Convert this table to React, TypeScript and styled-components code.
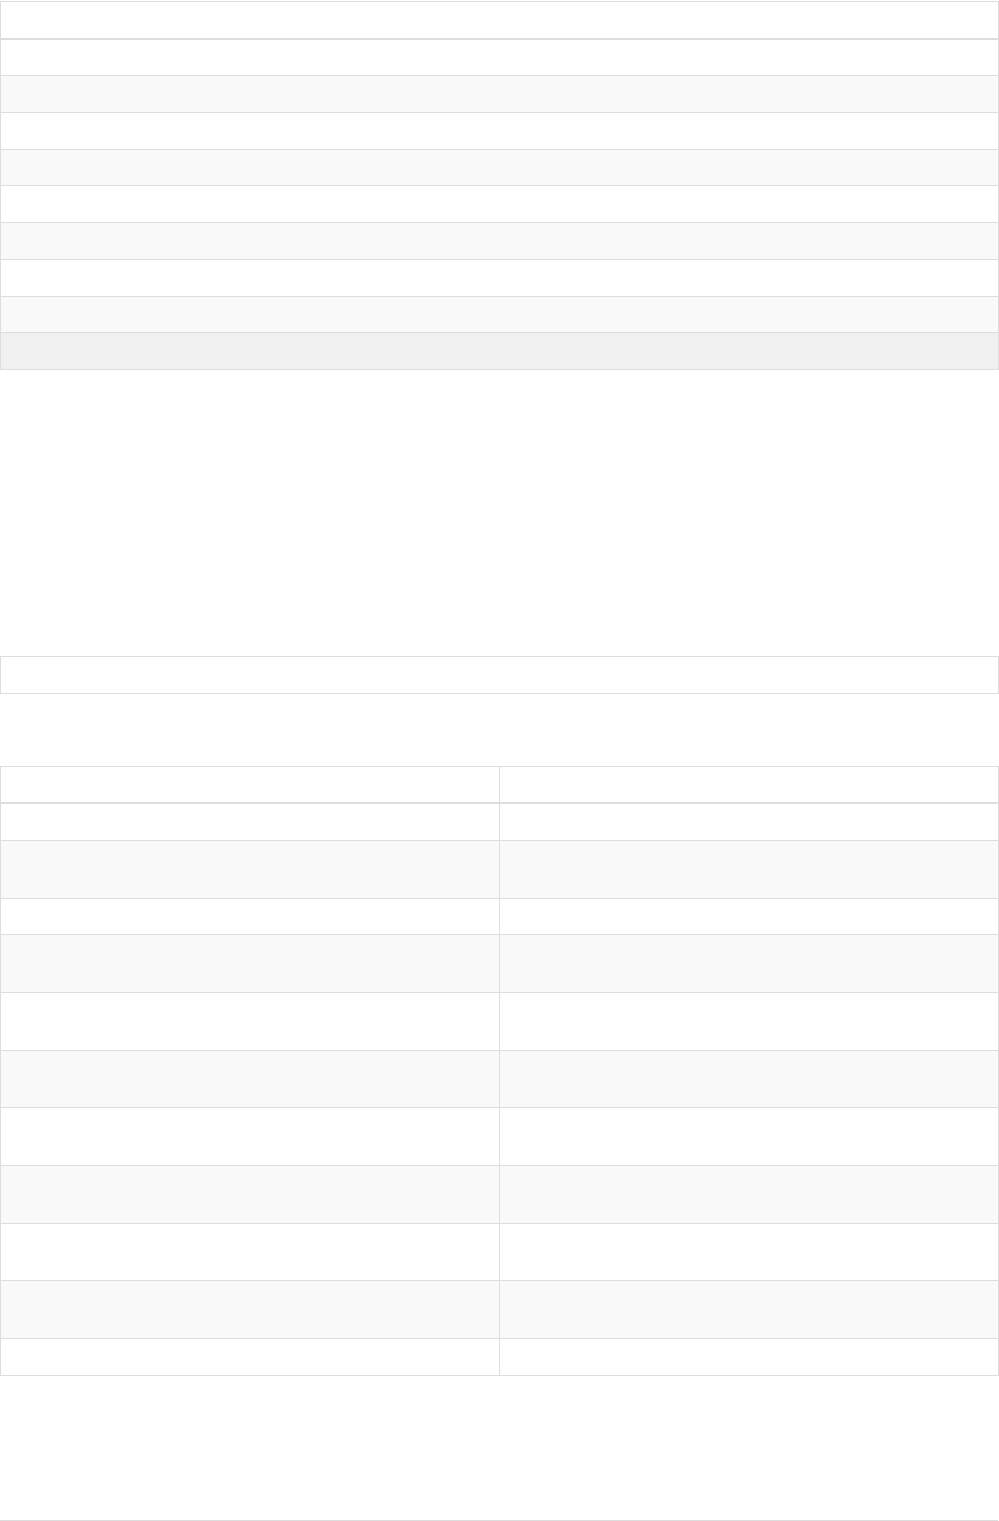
import React from "react";
import styled, { createGlobalStyle } from "styled-components";

const GlobalStyle = createGlobalStyle`
  html, body {
    margin: 0;
    padding: 0;
    background: #ffffff;
  }
  body {
    font-family: "Liberation Sans", Arial, sans-serif;
    font-size: 14px;
    color: #333333;
  }
`;

const Page = styled.div`
  width: 999px;
  display: flex;
  flex-direction: column;
  padding-top: 1px;
`;

const Section = styled.div<{ $gap: number }>`
  margin-top: ${(p) => p.$gap}px;
`;

const Table = styled.table`
  width: 100%;
  border-collapse: collapse;
  border-spacing: 0;
  border: 1px solid #dddddd;
  table-layout: fixed;
`;

const HeadCell = styled.th`
  padding: 7.35px 8px;
  line-height: 21px;
  text-align: left;
  font-weight: bold;
  border: 1px solid #dddddd;
  border-bottom: 2px solid #dddddd;
`;

const Row = styled.tr<{ $tone: "plain" | "stripe" | "active" }>`
  background: ${(p) =>
    p.$tone === "stripe" ? "#f9f9f9" : p.$tone === "active" ? "#f0f0f0" : "#ffffff"};
`;

const Cell = styled.td`
  padding: 7.35px 8px;
  line-height: 21px;
  border: 1px solid #dddddd;
  vertical-align: top;
`;

const Blank = styled.span<{ $lines: number }>`
  display: block;
  height: ${(p) => p.$lines * 21}px;
`;

const Box = styled.div`
  border: 1px solid #dddddd;
  padding: 7.35px 8px;
  line-height: 21px;
`;

const Rule = styled.div`
  width: 998px;
  border-top: 1px solid #dddddd;
`;

const firstRows: Array<"plain" | "stripe" | "active"> = [
  "plain",
  "stripe",
  "plain",
  "stripe",
  "plain",
  "stripe",
  "plain",
  "stripe",
  "active",
];

const secondRows: number[] = [1, 2, 1, 2, 2, 2, 2, 2, 2, 2, 1];

export default function App() {
  return (
    <>
      <GlobalStyle />
      <Page>
        <Table>
          <thead>
            <tr>
              <HeadCell>
                <Blank $lines={1} />
              </HeadCell>
            </tr>
          </thead>
          <tbody>
            {firstRows.map((tone, i) => (
              <Row key={i} $tone={tone}>
                <Cell>
                  <Blank $lines={1} />
                </Cell>
              </Row>
            ))}
          </tbody>
        </Table>

        <Section $gap={286}>
          <Box>
            <Blank $lines={1} />
          </Box>
        </Section>

        <Section $gap={72}>
          <Table>
            <thead>
              <tr>
                <HeadCell>
                  <Blank $lines={1} />
                </HeadCell>
                <HeadCell>
                  <Blank $lines={1} />
                </HeadCell>
              </tr>
            </thead>
            <tbody>
              {secondRows.map((lines, i) => (
                <Row key={i} $tone={i % 2 === 1 ? "stripe" : "plain"}>
                  <Cell>
                    <Blank $lines={lines} />
                  </Cell>
                  <Cell>
                    <Blank $lines={lines} />
                  </Cell>
                </Row>
              ))}
            </tbody>
          </Table>
        </Section>

        <Section $gap={144}>
          <Rule />
        </Section>
      </Page>
    </>
  );
}
